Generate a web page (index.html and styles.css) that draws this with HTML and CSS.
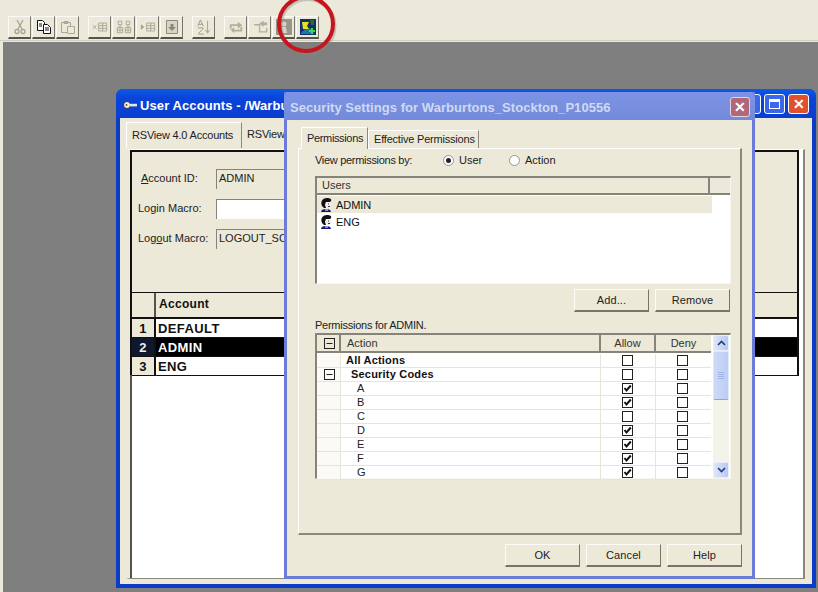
FILE: index.html
```html
<!DOCTYPE html>
<html lang="en">
<head>
<meta charset="utf-8">
<title>Security Settings</title>
<link rel="stylesheet" href="styles.css">
</head>
<body>
<svg class="defs" width="0" height="0" aria-hidden="true">
  <symbol id="check" viewBox="0 0 9 9"><path d="M1.500 4l2 2.500L7.800 1.500" fill="none" stroke="#111" stroke-width="2"/></symbol>
  <symbol id="person" viewBox="0 0 12 14">
    <path d="M1 14c0-2 2-3 5-3s5 1 5 3z" fill="#16167a"/>
    <path d="M2 8C0 3 3 0 7 0c3 0 5 1 4 3l-1 1H6L5 7l1 3H4z" fill="#111"/>
    <path d="M6 4h4.500l.5 3-1 3H7L5.500 7z" fill="#eee"/>
    <path d="M8 6h1M8 8.500h2" stroke="#333" fill="none"/>
    <path d="M5 11.500h3v1H5z" fill="#fff"/>
  </symbol>
  <symbol id="minus" viewBox="0 0 11 11"><rect x=".5" y=".5" width="10" height="10" fill="none" stroke="#222"/><path d="M2.500 5.500h6" stroke="#222"/></symbol>
</svg>
<div class="screen">
  <div class="toolbar">
    <div class="tgroup">
      <div class="tbtn"><svg viewBox="0 0 16 16"><path d="M5 1l5 9M11 1L6 10" stroke="#a5a395" stroke-width="1.300" fill="none"/><circle cx="5" cy="12.500" r="2" fill="none" stroke="#a5a395" stroke-width="1.300"/><circle cx="11" cy="12.500" r="2" fill="none" stroke="#a5a395" stroke-width="1.300"/></svg></div>
      <div class="tbtn"><svg viewBox="0 0 16 16"><path d="M1.500 1.500h5l2 2v8h-7z" fill="#fff" stroke="#111"/><path d="M7.500 5.500h4l3 3v6h-7z" fill="#fff" stroke="#111"/><path d="M3 5h3M3 7h3M9 9h4M9 11h4" stroke="#111"/></svg></div>
      <div class="tbtn"><svg viewBox="0 0 16 16"><path d="M1.500 3.500h9v10h-9zM4 2.500h4v2H4z" fill="none" stroke="#aaa89a"/><path d="M7.500 7.500h7v7h-7z" fill="#ece9d8" stroke="#aaa89a"/></svg></div>
    </div>
    <div class="tgroup">
      <div class="tbtn"><svg viewBox="0 0 18 16"><path d="M1 6l4 4M5 6l-4 4" stroke="#a5a395" fill="none"/><path d="M7.500 3.500h9v9h-9zM7.500 6.500h9M7.500 9.500h9M12 3.500v9" fill="none" stroke="#a5a395"/></svg></div>
      <div class="tbtn"><svg viewBox="0 0 18 16"><path d="M2.500 1.500h4v4h-4zM11.500 1.500h4v4h-4zM1.500 8.500h6v6h-6zM10.500 8.500h6v6h-6zM4.500 8.500v6M13.500 8.500v6M1.500 11.500h6M10.500 11.500h6M4.500 5.500v3M13.500 5.500v3" fill="none" stroke="#a5a395"/></svg></div>
      <div class="tbtn"><svg viewBox="0 0 18 16"><path d="M1 5l4 3-4 3z" fill="#a5a395"/><path d="M7.500 3.500h9v9h-9zM7.500 6.500h9M7.500 9.500h9M12 3.500v9" fill="none" stroke="#a5a395"/></svg></div>
      <div class="tbtn"><svg viewBox="0 0 16 16"><path d="M2.500 1.500h11v13h-11z" fill="#d8d5c5" stroke="#8c8a7c"/><path d="M6.500 5h3v3H12l-4 4-4-4h2.500z" fill="#8a887c"/></svg></div>
    </div>
    <div class="tgroup">
      <div class="tbtn"><svg viewBox="0 0 18 18"><path d="M5 1L2 8M5 1l3 7M3 6h4M2 10h6v1l-5 5v1h6" fill="none" stroke="#a09e90" stroke-width="1.100"/><path d="M13 2v13M10.500 12l2.500 4 2.500-4" fill="none" stroke="#a09e90"/></svg></div>
    </div>
    <div class="tgroup">
      <div class="tbtn"><svg viewBox="0 0 18 16"><path d="M2 5h9V2l5 4-5 4V7H4v3H2zM16 8v5H7v2l-4-3.500L7 8v3h7V8z" fill="#b0ae9e"/></svg></div>
      <div class="tbtn"><svg viewBox="0 0 18 16"><path d="M2.500 5.500h6v8h8v-4" fill="none" stroke="#b0ae9e" stroke-width="1.500"/><path d="M8 4l5-3v2h4v3h-4v2z" fill="#b0ae9e"/></svg></div>
      <div class="tbtn"><svg viewBox="0 0 16 16"><rect width="16" height="16" fill="#989689"/><circle cx="8" cy="5" r="2.500" fill="#d4d2c6"/><path d="M5 14l1-6h4l1 6z" fill="#d4d2c6"/></svg></div>
      <div class="tbtn"><svg viewBox="0 0 16 16"><rect width="16" height="16" fill="#10306c"/><path d="M1 14l5-5 6 1 2 5H1z" fill="#1a78a0"/><path d="M2 3h7L7 7l2 3H3z" fill="#e8e020"/><path d="M10 1h4v5h-3z" fill="#2c6a3a"/><path d="M11 9h2v2h2v2h-2v2h-2v-2H9v-2h2z" fill="#30e040"/></svg></div>
    </div>
  </div>

  <div class="desk"></div>

  <section class="win win-back">
    <header class="win-title">
      <svg class="key" viewBox="0 0 14 8"><circle cx="4" cy="4" r="3.500" fill="#f4f4ee" stroke="#333"/><circle cx="3.500" cy="4" r="1" fill="#555"/><path d="M7 2.800h7v2.600H7z" fill="#e6e6dc"/></svg>
      <span>User Accounts - /Warbu</span>
      <div class="win-btns">
        <span class="wb wb-blue"></span>
        <span class="wb wb-blue"><i class="maxglyph"></i></span>
        <span class="wb wb-red">✕</span>
      </div>
    </header>
    <div class="win-body">
      <div class="back-tabs">
        <span class="back-tab active">RSView 4.0 Accounts</span>
        <span class="back-tab">RSView</span>
      </div>
      <div class="back-panel">
        <div class="back-form">
          <div class="frow first"><label class="lbl indent"><u>A</u>ccount ID:</label><span class="field">ADMIN</span></div>
          <div class="frow"><label class="lbl">Login Macro:</label><span class="field"></span></div>
          <div class="frow"><label class="lbl">Log<u>o</u>ut Macro:</label><span class="field">LOGOUT_SC</span></div>
        </div>
        <div class="grid-head"><span class="g-corner"></span><span class="g-title">Account</span></div>
        <div class="g-row"><span class="g-num">1</span><span class="g-cell">DEFAULT</span></div>
        <div class="g-row sel"><span class="g-num">2</span><span class="g-cell">ADMIN</span></div>
        <div class="g-row"><span class="g-num">3</span><span class="g-cell">ENG</span></div>
        <div class="g-rest"></div>
      </div>
    </div>
  </section>

  <section class="win win-front">
    <header class="front-title">
      <span>Security Settings for Warburtons_Stockton_P10556</span>
      <span class="front-close">✕</span>
    </header>
    <div class="front-body">
      <div class="tabs">
        <span class="tab active">Permissions</span>
        <span class="tab">Effective Permissions</span>
      </div>
      <div class="panel">
        <div class="viewby">
          <span class="vb-label">View permissions by:</span>
          <span class="radio on"></span><span class="vb-user">User</span>
          <span class="radio"></span><span>Action</span>
        </div>
        <div class="users">
          <div class="users-head"><span class="uh-main">Users</span><span class="uh-end"></span></div>
          <div class="urow hl"><svg class="person"><use href="#person"/></svg>ADMIN</div>
          <div class="urow"><svg class="person"><use href="#person"/></svg>ENG</div>
        </div>
        <div class="addrem"><button class="btn">Add...</button><button class="btn">Remove</button></div>
        <div class="perm-label">Permissions for ADMIN.</div>
        <div class="perms">
          <div class="p-head">
            <span class="c0 hc"><svg class="mini"><use href="#minus"/></svg></span>
            <span class="c1 hc act">Action</span>
            <span class="c2 hc">Allow</span>
            <span class="c3 hc">Deny</span>
          </div>
          <div class="p-main">
            <div class="p-rows">
              <div class="p-row"><span class="c0"></span><span class="c1 b">All Actions</span><span class="c2"><i class="cb"></i></span><span class="c3"><i class="cb"></i></span></div>
              <div class="p-row"><span class="c0"><svg class="mini"><use href="#minus"/></svg></span><span class="c1 b l1">Security Codes</span><span class="c2"><i class="cb"></i></span><span class="c3"><i class="cb"></i></span></div>
              <div class="p-row"><span class="c0"></span><span class="c1 l2">A</span><span class="c2"><i class="cb"><svg><use href="#check"/></svg></i></span><span class="c3"><i class="cb"></i></span></div>
              <div class="p-row"><span class="c0"></span><span class="c1 l2">B</span><span class="c2"><i class="cb"><svg><use href="#check"/></svg></i></span><span class="c3"><i class="cb"></i></span></div>
              <div class="p-row"><span class="c0"></span><span class="c1 l2">C</span><span class="c2"><i class="cb"></i></span><span class="c3"><i class="cb"></i></span></div>
              <div class="p-row"><span class="c0"></span><span class="c1 l2">D</span><span class="c2"><i class="cb"><svg><use href="#check"/></svg></i></span><span class="c3"><i class="cb"></i></span></div>
              <div class="p-row"><span class="c0"></span><span class="c1 l2">E</span><span class="c2"><i class="cb"><svg><use href="#check"/></svg></i></span><span class="c3"><i class="cb"></i></span></div>
              <div class="p-row"><span class="c0"></span><span class="c1 l2">F</span><span class="c2"><i class="cb"><svg><use href="#check"/></svg></i></span><span class="c3"><i class="cb"></i></span></div>
              <div class="p-row"><span class="c0"></span><span class="c1 l2">G</span><span class="c2"><i class="cb"><svg><use href="#check"/></svg></i></span><span class="c3"><i class="cb"></i></span></div>
            </div>
          </div>
          <div class="sbar">
            <span class="sb-btn"><svg viewBox="0 0 9 6"><path d="M1 5l3.500-3.500L8 5" fill="none" stroke="#1f3a80" stroke-width="1.600"/></svg></span>
            <span class="sb-thumb"><i></i><i></i><i></i><i></i></span>
            <span class="sb-space"></span>
            <span class="sb-btn"><svg viewBox="0 0 9 6"><path d="M1 1l3.500 3.500L8 1" fill="none" stroke="#1f3a80" stroke-width="1.600"/></svg></span>
          </div>
        </div>
      </div>
      <div class="foot"><button class="btn">OK</button><button class="btn">Cancel</button><button class="btn">Help</button></div>
    </div>
  </section>

  <svg class="ring" viewBox="0 0 70 60" width="70" height="60" aria-hidden="true">
    <ellipse cx="31.500" cy="26" rx="27" ry="27" fill="none" stroke="#7f8a7a" stroke-opacity=".4" stroke-width="4"/>
    <ellipse cx="30" cy="24" rx="27" ry="27" fill="none" stroke="#c8141e" stroke-width="4"/>
  </svg>
</div>
</body>
</html>
```
FILE: styles.css
```css
* { box-sizing: border-box; }
html, body { margin: 0; padding: 0; }
body { width: 818px; height: 592px; overflow: hidden; font-family: "Liberation Sans", Arial, sans-serif; font-size: 11px; color: #111; }
.defs { position: absolute; }
.screen { position: relative; width: 818px; height: 592px; background: #ebe9d9; overflow: hidden; }

.toolbar { display: flex; gap: 9px; height: 41px; padding: 16px 0 0 8px; background: #ebe9d9; border-bottom: 1px solid #d2d0c2; }
.tgroup { display: flex; gap: 1px; height: 23px; }
.tbtn { width: 23px; height: 23px; display: flex; align-items: center; justify-content: center; background: #ece9d8; border-top: 1px solid #fbfaf4; border-left: 1px solid #fbfaf4; border-right: 1px solid #77756a; border-bottom: 2px solid #55544a; }
.tbtn svg { width: 16px; height: 16px; }

.desk { position: absolute; left: 3px; top: 42px; right: 0; bottom: 0; background: #7f7f7f; }

.win { position: absolute; display: flex; flex-direction: column; }
.win-back { left: 116px; top: 89px; width: 700px; height: 499px; background: #0a3cc8; border-radius: 7px 7px 0 0; padding: 0 4px 4px; }
.win-title { display: flex; align-items: center; height: 29px; flex: none; margin: 0 -4px; padding: 3px 0 0 7px; color: #fff; font: bold 13px "Liberation Sans", sans-serif; background: linear-gradient(#0c5ae8, #0a44d8 30%, #0a3fd0); border-radius: 7px 7px 0 0; }
.win-title > span:nth-child(2) { white-space: nowrap; letter-spacing: .1px; }
.key { width: 14px; height: 8px; margin-right: 3px; flex: none; }
.win-btns { margin-left: auto; display: flex; gap: 3px; padding: 0 7px 3px 0; }
.wb { width: 21px; height: 20px; border: 1px solid #fff; border-radius: 3px; display: flex; align-items: center; justify-content: center; font-size: 14px; font-weight: bold; color: #fff; }
.wb-blue { background: #3a68e8; }
.wb-red { background: #e0502a; }
.maxglyph { display: block; width: 11px; height: 10px; border: 1px solid #fff; border-top-width: 3px; }
.win-body { flex: 1; background: #ece9d8; padding: 4px 7px 5px 6px; display: flex; flex-direction: column; min-height: 0; }
.back-tabs { display: flex; height: 27px; flex: none; }
.back-tab { height: 26px; padding: 6px 4px 0 5px; background: #ece9d8; color: #222; border-right: 1px solid #8a8878; white-space: nowrap; letter-spacing: -.2px; }
.back-tab.active { width: 116px; border-top: 1px solid #fff; border-left: 1px solid #fff; }
.back-panel { flex: 1; display: flex; flex-direction: column; background: #fff; border-right: 2px solid #8a8878; border-bottom: 1px solid #8a8878; padding: 0 4px 0 0; border-top: 1px solid #fff; border-left: 4px solid #ece9d8; }
.back-form { height: 142px; flex: none; background: #ece9d8; border-top: 2px solid #111; border-left: 2px solid #111; border-right: 2px solid #111; padding-top: 17px; }
.frow { display: flex; align-items: center; height: 21px; margin-bottom: 9px; padding-left: 6px; }
.frow.first { height: 19px; margin-bottom: 10px; }
.lbl { width: 78px; flex: none; font-size: 11px; color: #222; padding-bottom: 2px; }
.lbl.indent { padding-left: 3px; }
.field { display: block; width: 110px; height: 20px; background: #fff; border-top: 1px solid #85837a; border-left: 1px solid #85837a; font-size: 11px; line-height: 16px; padding-left: 2px; white-space: nowrap; overflow: hidden; color: #222; }
.frow.first .field { background: #ece9d8; }
.frow:last-child .field { background: #ece9d8; }
.grid-head { display: flex; height: 27px; flex: none; background: #ece9d8; border-top: 1px solid #111; border-left: 2px solid #111; border-right: 2px solid #111; border-bottom: 2px solid #111; }
.g-corner { width: 24px; border-right: 2px solid #55544a; }
.g-title { padding: 4px 0 0 3px; font: bold 12px "Liberation Sans", sans-serif; letter-spacing: .3px; }
.g-row { display: flex; height: 19px; flex: none; border-left: 2px solid #111; border-right: 2px solid #111; border-bottom: 1px solid #111; background: #fff; font: bold 13px "Liberation Sans", sans-serif; letter-spacing: .4px; color: #111; }
.g-num { width: 24px; text-align: center; background: #ece9d8; border-right: 2px solid #111; line-height: 19px; }
.g-cell { padding-left: 2px; line-height: 20px; }
.g-row.sel { background: #000; color: #fff; }
.g-row.sel .g-num { background: #10182e; color: #eee; }
.g-rest { flex: 1; border-left: 2px solid #55544a; margin-top: -1px; }

.win-front { left: 284px; top: 92px; width: 471px; height: 487px; border: 3px solid #6c7ad8; border-top: none; background: #ece9d8; }
.front-title { display: flex; align-items: center; height: 28px; flex: none; margin: 0 -3px; padding: 2px 5px 0 6px; color: #d0d9f3; background: linear-gradient(#7d92e4, #7990e0 50%, #7389da); font: bold 13px "Liberation Sans", sans-serif; letter-spacing: .05px; border-radius: 5px 5px 0 0; white-space: nowrap; }
.front-close { margin-left: auto; width: 20px; height: 20px; background: #b0677a; border: 1px solid #e4d4dc; border-radius: 3px; color: #fff; display: flex; align-items: center; justify-content: center; font-size: 14px; letter-spacing: 0; }
.front-body { flex: 1; display: flex; flex-direction: column; min-height: 0; padding: 7px 0 0 11px; }
.tabs { display: flex; height: 21px; flex: none; align-items: flex-end; padding-left: 3px; }
.tab { height: 18px; width: 111px; padding: 2px 0 0 5px; border-top: 1px solid #fff; border-left: 1px solid #fff; border-right: 1px solid #8a8878; white-space: nowrap; color: #222; letter-spacing: -.2px; }
.tab.active { position: relative; z-index: 1; height: 22px; margin-bottom: -1px; width: 67px; padding-top: 4px; background: #ece9d8; letter-spacing: -.35px; }
.panel { width: 444px; height: 387px; flex: none; border-top: 1px solid #fff; border-left: 1px solid #fff; border-right: 2px solid #8a8878; border-bottom: 2px solid #8a8878; padding: 4px 0 0 16px; }
.viewby { display: flex; align-items: center; height: 14px; margin-bottom: 9px; color: #222; white-space: nowrap; }
.vb-label { width: 128px; letter-spacing: -.3px; }
.vb-user { width: 50px; }
.radio { width: 11px; height: 11px; margin-right: 5px; border: 1px solid #8a97a8; border-radius: 50%; background: #fff; position: relative; flex: none; }
.radio.on::after { content: ""; position: absolute; left: 2px; top: 2px; width: 5px; height: 5px; border-radius: 50%; background: #222; }
.users { width: 416px; height: 108px; background: #fff; border-top: 2px solid #85837a; border-left: 2px solid #85837a; border-right: 1px solid #f6f5ee; border-bottom: 1px solid #f6f5ee; }
.users-head { display: flex; height: 17px; background: #ece9d8; border-bottom: 2px solid #85837a; }
.uh-main { width: 393px; padding: 1px 0 0 5px; border-right: 2px solid #85837a; color: #333; }
.urow { display: flex; align-items: center; gap: 4px; width: 395px; height: 17px; padding-left: 3px; font-size: 11px; color: #111; letter-spacing: -.05px; }
.urow.hl { background: #ece9d8; margin-top: 1px; }
.person { width: 12px; height: 14px; flex: none; }
.addrem { display: flex; gap: 6px; padding-left: 259px; margin-top: 5px; }
.btn { width: 75px; height: 23px; padding: 0; background: #ece9d8; font: 11px "Liberation Sans", sans-serif; letter-spacing: .1px; color: #222; border: 1px solid #fdfcf8; border-right-color: #77756a; border-bottom: 2px solid #77756a; }
.perm-label { margin-top: 7px; height: 15px; color: #222; letter-spacing: -.25px; }
.perms { position: relative; width: 416px; height: 146px; margin-top: -1px; background: #fff; border-top: 2px solid #85837a; border-left: 2px solid #85837a; border-right: 1px solid #f6f5ee; border-bottom: 1px solid #f6f5ee; }
.p-head { display: flex; width: 394px; height: 18px; background: #ece9d8; border-bottom: 2px solid #85837a; }
.hc { display: flex; align-items: center; justify-content: center; color: #333; border-right: 2px solid #85837a; }
.hc:last-child { border-right: none; }
.hc.act { justify-content: flex-start; padding-left: 6px; }
.c0 { width: 24px; flex: none; display: flex; align-items: center; justify-content: center; padding-left: 2px; }
.c1 { width: 260px; flex: none; }
.c2 { width: 55px; flex: none; display: flex; align-items: center; justify-content: center; }
.c3 { width: 55px; flex: none; display: flex; align-items: center; justify-content: center; }
.mini { width: 11px; height: 11px; display: block; }
.p-rows { width: 394px; padding-top: 1px; }
.p-row { display: flex; height: 14px; border-bottom: 1px solid #e6e5da; font-size: 11px; line-height: 13px; color: #222; }
.p-row .c0, .p-row .c1, .p-row .c2 { border-right: 1px solid #e6e5da; }
.p-row .c0 { background: #fbfaf6; }
.b { font-weight: bold; font-size: 11px; letter-spacing: .2px; padding-left: 5px; color: #111; }
.b.l1 { padding-left: 10px; }
.l2 { padding-left: 16px; letter-spacing: .4px; }
.cb { display: block; width: 11px; height: 11px; margin-right: 2px; border: 1px solid #222; background: #fff; }
.cb svg { display: block; width: 9px; height: 9px; }
.sbar { position: absolute; left: 396px; top: 0; width: 16px; height: 143px; display: flex; flex-direction: column; background: #f4f3ea; }
.sb-btn { height: 16px; flex: none; display: flex; align-items: center; justify-content: center; background: linear-gradient(90deg, #dfe7f8, #b7c9f0); border: 1px solid #e8eefb; border-radius: 2px; }
.sb-btn svg { width: 9px; height: 6px; }
.sb-thumb { height: 49px; flex: none; display: flex; flex-direction: column; align-items: center; justify-content: center; gap: 1px; background: linear-gradient(90deg, #cdd9f6, #bccdf4); border: 1px solid #dfe7fb; border-bottom-color: #8ea4de; border-radius: 2px; }
.sb-thumb i { display: block; width: 6px; height: 1px; background: #9fb3e4; }
.sb-space { flex: 1; }
.foot { display: flex; gap: 6px; padding: 9px 0 0 207px; }

.ring { position: absolute; left: 276px; top: 0; overflow: visible; }
```
